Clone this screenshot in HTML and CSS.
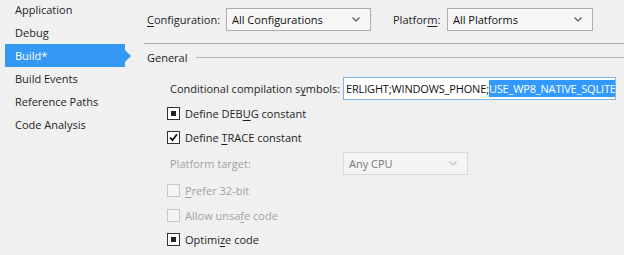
FILE: index.html
```html
<!DOCTYPE html>
<html lang="en">
<head>
    <meta charset="UTF-8">
    <meta name="viewport" content="width=device-width, initial-scale=1.0">
    <title>Project Properties - Build</title>
    <link rel="stylesheet" href="styles.css">
</head>
<body>
    <div class="window">
        <ul class="nav">
            <li>Application</li>
            <li>Debug</li>
            <li class="selected">Build*</li>
            <li>Build Events</li>
            <li>Reference Paths</li>
            <li>Code Analysis</li>
        </ul>

        <div class="page">
            <div class="toolbar">
                <span class="label config-label"><u>C</u>onfiguration:</span>
                <div class="combo config-combo">
                    <span>All Configurations</span>
                    <svg class="chevron" width="8" height="5" viewBox="0 0 8 5"><path d="M0.5 0.5 L4 4 L7.5 0.5" fill="none" stroke="#555" stroke-width="1.2"/></svg>
                </div>
                <span class="label platform-label">Platfor<u>m</u>:</span>
                <div class="combo platform-combo">
                    <span>All Platforms</span>
                    <svg class="chevron" width="8" height="5" viewBox="0 0 8 5"><path d="M0.5 0.5 L4 4 L7.5 0.5" fill="none" stroke="#555" stroke-width="1.2"/></svg>
                </div>
            </div>

            <div class="section-title">General</div>

            <div class="form">
                <div class="row symbols-row">
                    <span class="label symbols-label">Conditional compilation s<u>y</u>mbols:</span>
                    <div class="textbox">
                        <span>ERLIGHT;WINDOWS_PHONE;</span><span class="selection">USE_WP8_NATIVE_SQLITE</span>
                    </div>
                </div>

                <div class="row check-row first-check">
                    <span class="checkbox"><span class="dot"></span></span>
                    <span class="label">Define DEB<u>U</u>G constant</span>
                </div>
                <div class="row check-row">
                    <span class="checkbox">
                        <svg width="9" height="9" viewBox="0 0 9 9"><path d="M1 4.5 L3.5 7.2 L8 1.2" fill="none" stroke="#111" stroke-width="1.8"/></svg>
                    </span>
                    <span class="label">Define <u>T</u>RACE constant</span>
                </div>

                <div class="row target-row">
                    <span class="label disabled target-label">Platform target:</span>
                    <div class="combo disabled-combo target-combo">
                        <span>Any CPU</span>
                        <svg class="chevron" width="8" height="5" viewBox="0 0 8 5"><path d="M0.5 0.5 L4 4 L7.5 0.5" fill="none" stroke="#c4c4c4" stroke-width="1.2"/></svg>
                    </div>
                </div>

                <div class="row check-row first-disabled">
                    <span class="checkbox disabled-box"></span>
                    <span class="label disabled"><u>P</u>refer 32-bit</span>
                </div>
                <div class="row check-row">
                    <span class="checkbox disabled-box"></span>
                    <span class="label disabled">Allow unsa<u>f</u>e code</span>
                </div>
                <div class="row check-row">
                    <span class="checkbox"><span class="dot"></span></span>
                    <span class="label">Optimi<u>z</u>e code</span>
                </div>
            </div>
        </div>
    </div>
</body>
</html>
```

FILE: styles.css
```css
body {
    margin: 0;
    background-color: #f0f0f0;
    font-family: "Open Sans", "Noto Sans", sans-serif;
    font-size: 11px;
    color: #1e1e1e;
    overflow: hidden;
}
u {
    text-decoration-thickness: 1px;
    text-underline-offset: 2px;
}
.window {
    display: flex;
    height: 255px;
}

/* left navigation */
.nav {
    list-style: none;
    margin: -2px 0 0 0;
    padding: 0;
    width: 144px;
    flex-shrink: 0;
}
.nav li {
    height: 23px;
    line-height: 23px;
    padding-left: 15px;
}
.nav li.selected {
    position: relative;
    margin-left: 5px;
    width: 110px;
    padding-left: 10px;
    background-color: #3399f3;
    color: white;
}
.nav li.selected::after {
    content: "";
    position: absolute;
    right: -6px;
    top: 6px;
    border-left: 6px solid #3399f3;
    border-top: 6px solid transparent;
    border-bottom: 6px solid transparent;
}

/* property page */
.page {
    flex: 1;
}
.toolbar {
    display: flex;
    align-items: center;
    box-sizing: border-box;
    height: 44px;
    padding: 0 0 5px 3px;
    border-bottom: 1px solid #a9a9a9;
}
.label {
    white-space: nowrap;
}
.config-label {
    width: 79px;
}
.platform-label {
    margin-left: 22px;
    width: 54px;
}
.combo {
    display: flex;
    align-items: center;
    justify-content: space-between;
    box-sizing: border-box;
    height: 23px;
    padding: 0 10px 0 5px;
    border: 1px solid #acacac;
    background-color: #f7f7f7;
    color: #111;
}
.config-combo {
    width: 145px;
}
.platform-combo {
    width: 146px;
}
.section-title {
    display: flex;
    align-items: center;
    height: 27px;
    padding-left: 3px;
}
.section-title::after {
    content: "";
    flex: 1;
    margin-left: 9px;
    border-top: 1px solid #b4b4b4;
}

.form {
    padding-left: 23px;
}
.row {
    display: flex;
    align-items: center;
}
.symbols-row {
    height: 23px;
    margin-top: 6px;
    padding-left: 3px;
}
.symbols-label {
    width: 173px;
}
.textbox {
    box-sizing: border-box;
    width: 273px;
    height: 23px;
    padding: 0 1px 0 2px;
    border: 1px solid #7eb4ea;
    background: white;
    display: flex;
    align-items: center;
    white-space: nowrap;
    overflow: hidden;
    color: #111;
    letter-spacing: -0.16px;
}
.selection {
    background-color: #3399ff;
    color: white;
    line-height: 17px;
}
.check-row {
    height: 24px;
}
.first-check {
    margin-top: 1px;
}
.first-disabled {
    margin-top: 3px;
    height: 25px;
}
.checkbox {
    box-sizing: border-box;
    width: 13px;
    height: 13px;
    margin-right: 5px;
    border: 1px solid #333;
    background: white;
    display: flex;
    align-items: center;
    justify-content: center;
}
.checkbox .dot {
    width: 5px;
    height: 5px;
    background-color: #222;
}
.disabled-box {
    border-color: #c8c8c8;
    background-color: #f4f4f4;
}
.disabled {
    color: #a2a2a2;
}
.target-row {
    height: 23px;
    margin-top: 3px;
    padding-left: 3px;
}
.target-label {
    width: 173px;
}
.disabled-combo {
    width: 125px;
    border-color: #d9d9d9;
    background-color: #f4f4f4;
    color: #777;
}
```
